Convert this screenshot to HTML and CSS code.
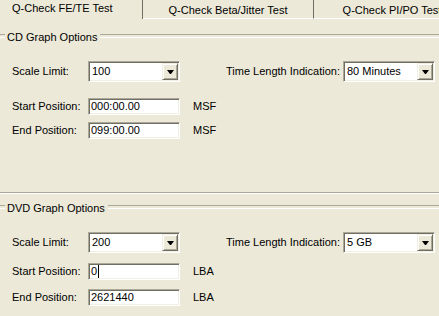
FILE: index.html
```html
<!DOCTYPE html>
<html lang="en">
<head>
    <meta charset="UTF-8">
    <title>Q-Check Options</title>
    <link rel="stylesheet" href="styles.css">
</head>
<body>
    <div class="tabs">
        <div class="tab tab-active">Q-Check FE/TE Test</div>
        <div class="tab">Q-Check Beta/Jitter Test</div>
        <div class="tab tab-last">Q-Check PI/PO Test</div>
    </div>

    <div class="group group-cd">
        <div class="group-title"><span>CD Graph Options</span></div>

        <div class="row row-scale">
            <span class="label">Scale Limit:</span>
            <div class="combo">
                <span class="combo-value">100</span>
                <span class="combo-button"></span>
            </div>
            <span class="label label-right">Time Length Indication:</span>
            <div class="combo">
                <span class="combo-value">80 Minutes</span>
                <span class="combo-button"></span>
            </div>
        </div>

        <div class="row row-start">
            <span class="label">Start Position:</span>
            <div class="edit">000:00.00</div>
            <span class="unit">MSF</span>
        </div>

        <div class="row row-end">
            <span class="label">End Position:</span>
            <div class="edit">099:00.00</div>
            <span class="unit">MSF</span>
        </div>
    </div>

    <div class="separator"></div>

    <div class="group group-dvd">
        <div class="group-title"><span>DVD Graph Options</span></div>

        <div class="row row-scale">
            <span class="label">Scale Limit:</span>
            <div class="combo">
                <span class="combo-value">200</span>
                <span class="combo-button"></span>
            </div>
            <span class="label label-right">Time Length Indication:</span>
            <div class="combo">
                <span class="combo-value">5 GB</span>
                <span class="combo-button"></span>
            </div>
        </div>

        <div class="row row-start">
            <span class="label">Start Position:</span>
            <div class="edit">0<span class="caret"></span></div>
            <span class="unit">LBA</span>
        </div>

        <div class="row row-end">
            <span class="label">End Position:</span>
            <div class="edit">2621440</div>
            <span class="unit">LBA</span>
        </div>
    </div>
</body>
</html>
```

FILE: styles.css
```css
* {
    box-sizing: border-box;
}

body {
    margin: 0;
    width: 439px;
    height: 316px;
    overflow: hidden;
    background: #ece9d8;
    color: #000;
    font-family: "Liberation Sans", Arial, sans-serif;
    font-size: 11px;
    line-height: 13px;
}

/* tab strip */
.tabs {
    display: flex;
    height: 19px;
    overflow: hidden;
}

.tab {
    flex-shrink: 0;
    width: 171px;
    height: 19px;
    padding-top: 4px;
    text-align: center;
    white-space: nowrap;
    border-right: 1px solid #716f64;
    border-bottom: 1px solid #fff;
}

.tab-active {
    width: 143px;
    padding: 2px 0 0 12px;
    text-align: left;
    border-bottom: 0;
}

.tab-last {
    width: 156px;
    border-right: 0;
}

/* group boxes */
.group-cd {
    padding-top: 12px;
}

.group-dvd {
    padding-top: 8px;
}

.group-title {
    display: flex;
    height: 13px;
}

.group-title::before,
.group-title::after {
    content: "";
    height: 2px;
    margin-top: 3px;
    border-top: 1px solid #aca899;
    border-bottom: 1px solid #fff;
}

.group-title::before {
    width: 5px;
    margin-right: 2px;
}

.group-title::after {
    flex: 1;
    margin-left: 3px;
}

.separator {
    height: 2px;
    margin-top: 53px;
    border-top: 1px solid #aca899;
    border-bottom: 1px solid #fff;
}

/* rows */
.row {
    display: flex;
    align-items: center;
    padding-left: 12px;
}

.row-scale {
    height: 21px;
    margin-top: 17px;
}

.row-start {
    height: 17px;
    margin-top: 16px;
}

.group-dvd .row-start {
    margin-top: 10px;
}

.row-end {
    height: 17px;
    margin-top: 7px;
}

.group-dvd .row-end {
    margin-top: 9px;
}

.label {
    width: 76px;
    white-space: nowrap;
}

.label-right {
    width: 117px;
    margin-left: 46px;
}

.unit {
    margin-left: 13px;
}

/* controls */
.combo,
.edit {
    width: 92px;
    display: flex;
    align-items: center;
    background: #fff;
    border: 1px solid;
    border-color: #aca899 #fff #fff #aca899;
    box-shadow: inset 1px 1px #716f64, inset -1px -1px #f1efe2;
}

.combo {
    height: 21px;
    justify-content: space-between;
    padding: 1px 1px 1px 3px;
}

.combo-button {
    width: 16px;
    height: 17px;
    display: flex;
    align-items: center;
    justify-content: center;
    background: #ece9d8;
    border: 1px solid;
    border-color: #f1efe2 #716f64 #716f64 #f1efe2;
    box-shadow: inset 1px 1px #fff, inset -1px -1px #aca899;
}

.combo-button::after {
    content: "";
    width: 1px;
    height: 0;
    border-top: 4px solid #000;
    border-left: 3px solid transparent;
    border-right: 3px solid transparent;
    box-sizing: content-box;
}

.edit {
    height: 17px;
    padding-left: 2px;
    line-height: 13px;
}

.caret {
    width: 1px;
    height: 13px;
    margin-left: 1px;
    background: #000;
}
```
